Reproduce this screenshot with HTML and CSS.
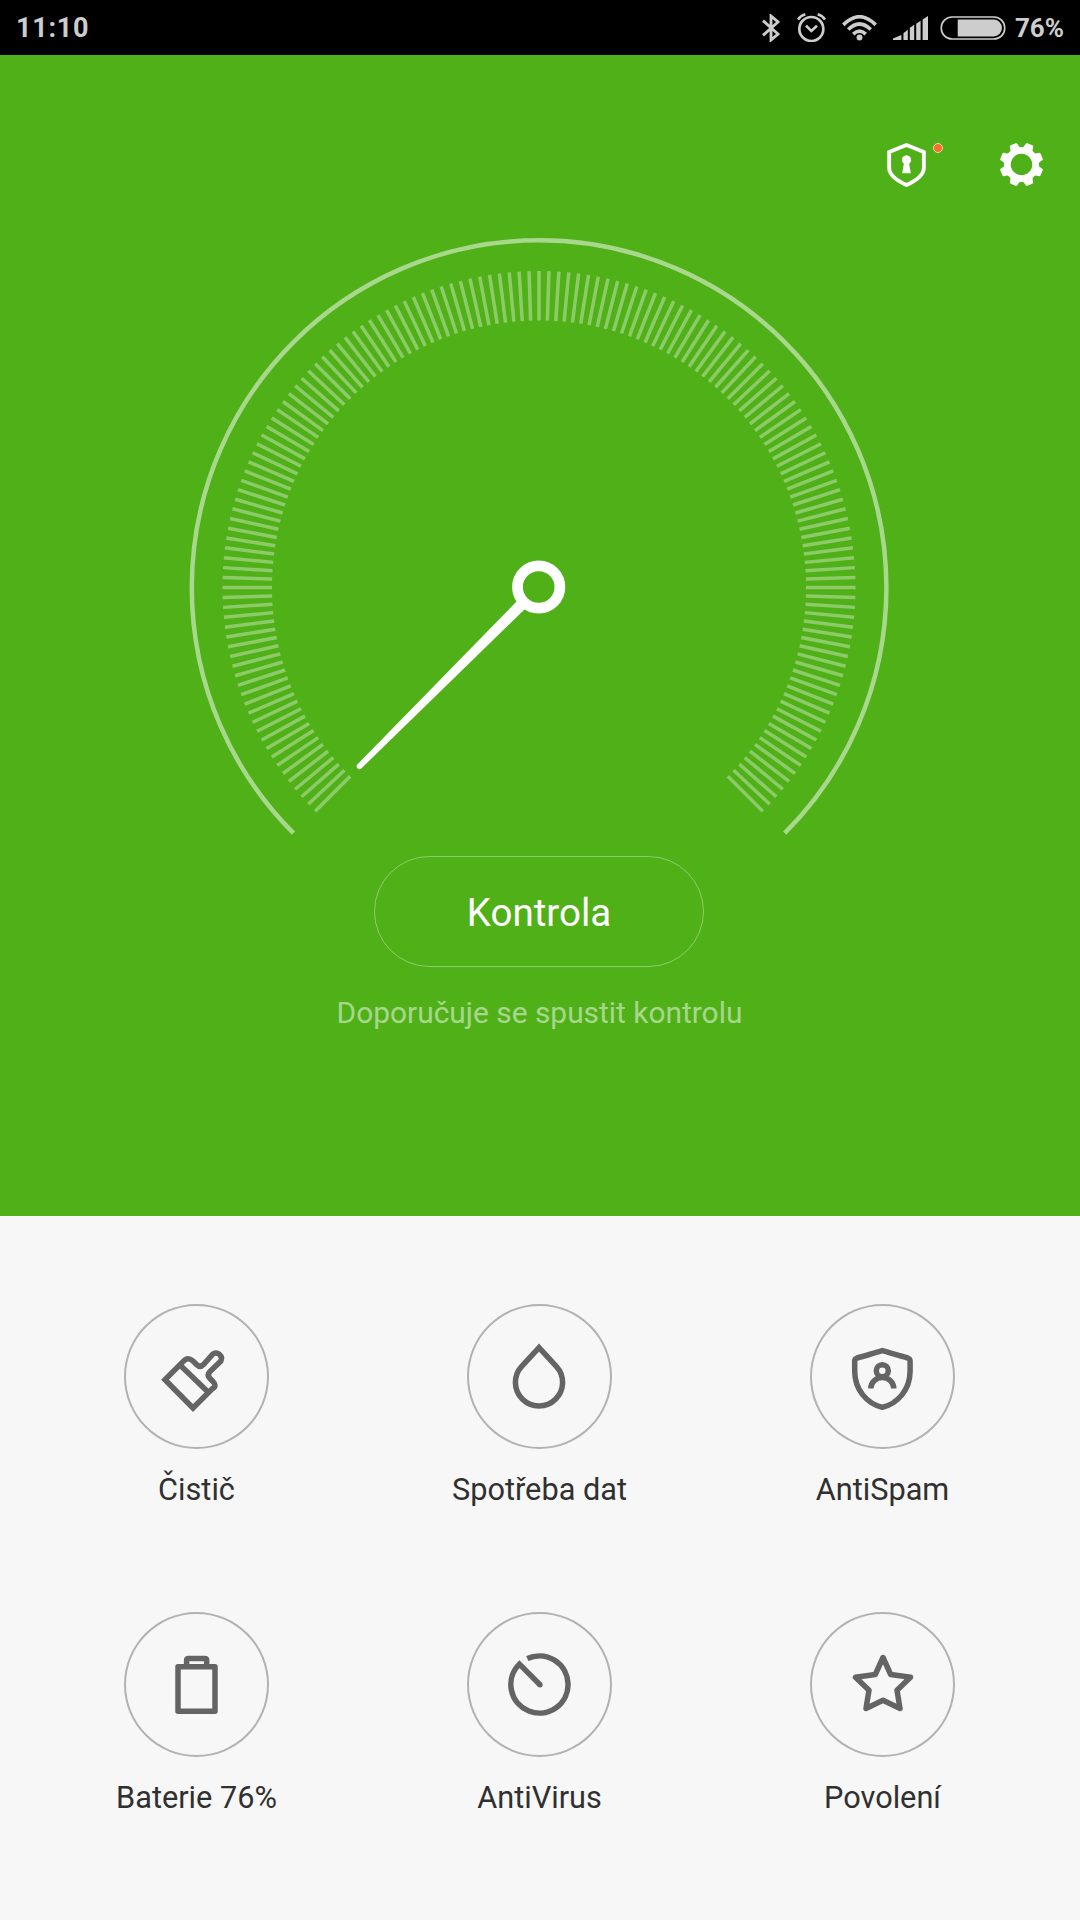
FILE: index.html
```html
<!DOCTYPE html>
<html lang="cs">
<head>
  <meta charset="UTF-8">
  <title>Zabezpečení</title>
  <link rel="stylesheet" href="styles.css">
</head>
<body>
  <div class="status-bar">
    <span class="time">11:10</span>
    <div class="status-icons">
      <svg class="bluetooth" viewBox="0 0 54 84">
        <path d="M3 20L48 60L27 78V6L48 24L3 64" />
      </svg>
      <svg class="alarm" viewBox="0 0 87 87">
        <circle cx="43" cy="48" r="36" />
        <path d="M27 38L43 54L60 38" />
        <path d="M3 20Q10 8 25 4M84 20Q77 8 62 4" />
      </svg>
      <svg class="wifi" viewBox="0 0 106 77">
        <path d="M4 29Q53 -20 102 29" />
        <path d="M19 43Q53 10 87 43" />
        <path d="M34 57Q53 39 72 57" />
        <circle cx="53" cy="67" r="9" />
      </svg>
      <svg class="signal" viewBox="0 0 104 71">
        <path d="M0 71V67L25 56V71ZM31 71V51L44 41V71ZM50 71V35L63 26V71ZM69 71V23L82 14V71ZM88 71V10L104 0V71Z" />
      </svg>
      <svg class="battery" viewBox="0 0 199 73">
        <rect x="3" y="3" width="193" height="67" rx="33" />
        <path d="M53 11H162A25 25 0 0 1 162 62H53Z" />
      </svg>
      <span class="percent">76%</span>
    </div>
  </div>

  <div class="hero">
    <div class="toolbar">
      <div class="protect">
        <svg class="shield" viewBox="0 0 116 132">
          <path class="outline" d="M58 6L110 27V75C110 98 82 115 58 126C34 115 6 98 6 75V27Z" />
          <path class="keyhole" d="M50 62A14 14 0 1 1 66 62L71 91H45Z" />
        </svg>
        <span class="dot"></span>
      </div>
      <svg class="gear" viewBox="-64 -64 128 128">
        <g id="teeth"></g>
        <circle r="42" />
      </svg>
    </div>

    <svg class="gauge" viewBox="0 0 700 602">
      <path class="arc" d="M104.5 595.2A347.3 347.3 0 1 1 595.7 595.2" />
      <g id="ticks"></g>
      <path class="needle" d="M328 363L168.5 526.3A2.8 2.8 0 0 0 172.5 530.3L336 371Z" />
      <circle class="hub" cx="349.7" cy="349" r="21.2" />
    </svg>

    <button class="check-button">Kontrola</button>
    <p class="hint">Doporučuje se spustit kontrolu</p>
  </div>

  <div class="menu">
    <div class="menu-item">
      <svg class="menu-icon" viewBox="0 0 145 145">
        <path d="M41 75.7L59 57.7Q64 52 69.5 57.5L72.5 60.5Q76 64 79.5 60.5L89 50A5.5 5.5 0 0 1 96.9 57L86 67.5Q82.5 71 86 74.5L88.5 77Q93.5 82 88.5 84.5L69 104Z" />
        <path d="M56 61L84 88" />
      </svg>
      <span>Čistič</span>
    </div>
    <div class="menu-item">
      <svg class="menu-icon" viewBox="0 0 145 145">
        <path d="M72 43.6L54.7 62.3A23.6 23.6 0 1 0 89.3 62.3Z" />
      </svg>
      <span>Spotřeba dat</span>
    </div>
    <div class="menu-item">
      <svg class="menu-icon" viewBox="0 0 145 145">
        <path d="M72.3 46.7C64 49 56 51.5 47 54Q44.7 54.8 44.7 57V67C44.7 86 57 99.5 72.3 103.4C87.6 99.5 100.1 86 100.1 67V57Q100.1 54.8 97.8 54C88.6 51.5 80.6 49 72.3 46.7Z" />
        <circle cx="72.3" cy="66.7" r="6" />
        <path d="M60.8 84.5A11.5 11 0 0 1 83.8 84.5" />
      </svg>
      <span>AntiSpam</span>
    </div>
    <div class="menu-item">
      <svg class="menu-icon" viewBox="0 0 145 145">
        <path d="M54 54.7H91V99.3H54Z" stroke-linejoin="round" />
        <path d="M62.6 54V48.5Q62.6 46.6 64.5 46.6H80.8Q82.7 46.6 82.7 48.5V54" />
      </svg>
      <span>Baterie 76%</span>
    </div>
    <div class="menu-item">
      <svg class="menu-icon" viewBox="0 0 145 145">
        <path d="M60.3 46.6A28.6 28.6 0 1 1 52.4 52.1L73 72.7" />
        <circle class="tip" cx="73" cy="72.7" r="2.7" />
      </svg>
      <span>AntiVirus</span>
    </div>
    <div class="menu-item">
      <svg class="menu-icon" viewBox="0 0 145 145">
        <path d="M73 45.5L80.7 62.5L100.5 65.3L87 78.3L90 96.5L73 88.3L56 96.5L59 78.3L45.5 65.3L65.3 62.5Z" stroke-linejoin="round" />
      </svg>
      <span>Povolení</span>
    </div>
  </div>

  <script>
    // 151 ticks over 270 degrees
    let ticks = "";
    for (let i = 0; i <= 150; i++) {
      ticks += `<path d="M350 33V82.5" transform="rotate(${-135 + i * 1.8} 350 349.5)" />`;
    }
    document.getElementById("ticks").innerHTML = ticks;

    let teeth = "";
    for (let i = 0; i < 8; i++) {
      teeth += `<path d="M-20 -44L-14 -52L-12 -62Q-11 -65 -8 -65H8Q11 -65 12 -62L14 -52L20 -44Z" transform="rotate(${22.5 + i * 45})" />`;
    }
    document.getElementById("teeth").innerHTML = teeth;
  </script>
</body>
</html>
```
FILE: styles.css
```css
body {
  margin: 0;
  background-color: #f7f7f7;
  font-family: Roboto, sans-serif;
}

svg {
  display: block;
  flex: none;
}

.status-bar {
  display: flex;
  justify-content: space-between;
  align-items: center;
  height: 55px;
  padding: 0 16px;
  box-sizing: border-box;
  background-color: black;
  color: #cdcdcd;
  font-size: 26px;
  font-weight: bold;
}

.time {
  font-size: 27px;
  letter-spacing: 0.7px;
}

.status-icons {
  display: flex;
  align-items: center;
}

.status-icons svg {
  fill: none;
  stroke: #cdcdcd;
}

.bluetooth {
  width: 18px;
  height: 28px;
  margin-right: 17px;
  stroke-width: 8.5;
}

.alarm {
  width: 29px;
  height: 29px;
  margin-right: 16px;
  stroke-width: 8;
}

.wifi {
  width: 35px;
  height: 26px;
  margin-right: 16px;
  stroke-width: 11;
}

.status-icons .wifi circle {
  fill: #cdcdcd;
  stroke: none;
}

.status-icons .signal {
  width: 35px;
  height: 24px;
  margin-right: 12px;
  fill: #cdcdcd;
  stroke: none;
}

.battery {
  width: 66px;
  height: 24px;
  margin-right: 9px;
  stroke-width: 5;
}

.battery path {
  fill: #cdcdcd;
  stroke: none;
}

.hero {
  display: flex;
  flex-direction: column;
  align-items: center;
  height: 1161px;
  background-color: #50b018;
}

.toolbar {
  display: flex;
  align-self: flex-end;
  height: 95px;
  margin: 88px 37px 0 0;
}

.protect {
  position: relative;
  width: 113px;
}

.shield {
  width: 39px;
  height: 44px;
}

.shield .outline {
  fill: none;
  stroke: white;
  stroke-width: 11.5;
}

.shield .keyhole {
  fill: white;
}

.dot {
  position: absolute;
  left: 46px;
  top: 0;
  width: 8px;
  height: 8px;
  border: 1px solid #e3dcb0;
  border-radius: 50%;
  background-color: #ff6b2c;
}

.gear {
  width: 43px;
  height: 43px;
  fill: white;
}

.gear circle {
  fill: none;
  stroke: white;
  stroke-width: 20;
}

.gauge {
  width: 700px;
  height: 602px;
  margin-right: 3px;
}

.gauge .arc {
  fill: none;
  stroke: rgba(255, 255, 255, 0.5);
  stroke-width: 4.5;
}

#ticks {
  stroke: rgba(255, 255, 255, 0.35);
  stroke-width: 3.5;
}

.needle {
  fill: white;
}

.hub {
  fill: none;
  stroke: white;
  stroke-width: 10.8;
}

.check-button {
  width: 330px;
  height: 111px;
  margin: 16px 2px 0 0;
  padding: 2px 0 0;
  border: 1px solid rgba(255, 255, 255, 0.35);
  border-radius: 56px;
  background: none;
  color: white;
  font-family: inherit;
  font-size: 38.5px;
}

.hint {
  margin: 28px 1px 0 0;
  color: rgba(255, 255, 255, 0.5);
  font-size: 29.9px;
  line-height: 36px;
}

.menu {
  display: grid;
  grid-template-columns: repeat(3, 343px);
  grid-auto-rows: 308px;
  padding: 88px 0 0 25px;
}

.menu-item {
  display: flex;
  flex-direction: column;
  align-items: center;
  color: #303030;
  font-size: 30.7px;
  line-height: 36px;
}

.menu-icon {
  width: 145px;
  height: 145px;
  margin-bottom: 23px;
  box-sizing: border-box;
  border-radius: 50%;
  box-shadow: inset 0 0 0 2px #b2b2b2;
  fill: none;
  stroke: #646464;
  stroke-width: 5.5;
}

.menu-icon .tip {
  fill: #646464;
  stroke: none;
}
```
